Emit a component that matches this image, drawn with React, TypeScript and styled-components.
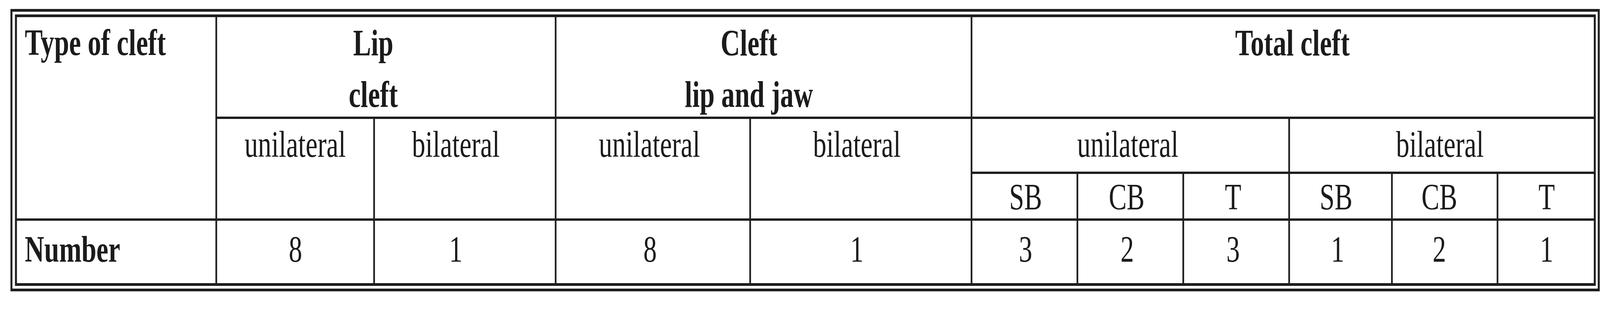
import React, { useEffect, useState } from 'react';
import styled, { createGlobalStyle } from 'styled-components';

const PAGE_W = 5667;
const PAGE_H = 800;

const GlobalStyle = createGlobalStyle`
  html, body {
    margin: 0;
    padding: 0;
    background: #ffffff;
    overflow: hidden;
  }
  body {
    font-family: "Liberation Serif", "Times New Roman", serif;
    color: #1b1b1b;
  }
  * {
    box-sizing: border-box;
  }
`;

// the drawing is laid out at 5667x800 and fitted to whatever window it gets
const Page = styled.div`
  width: ${PAGE_W}px;
  height: ${PAGE_H}px;
  overflow: hidden;
  transform-origin: 0 0;
`;

// outer rule of the double border
const Frame = styled.div`
  display: inline-block;
  margin: 23px 0 0 37px;
  border: 7px solid #1e1e1e;
  padding: 7px 7px 7px 9px;
`;

// the rules between cells are the grid background showing through the gaps
const Grid = styled.div`
  display: grid;
  grid-template-columns: 703px 553px 637px 683px 778px 369px 369px 369px 358px 368px 338px;
  grid-template-rows: 255px 135px 114px 160px;
  gap: 6px;
  padding: 7px;
  background: #1e1e1e;
`;

const Cell = styled.div<{ $col: string; $row: string; $shift?: number }>`
  grid-column: ${({ $col }) => $col};
  grid-row: ${({ $row }) => $row};
  background: #ffffff;
  font-size: 95px;
  line-height: 130px;
  text-align: center;
  white-space: nowrap;
  padding-left: ${({ $shift = 0 }) => Math.max(0, $shift * 2)}px;
  padding-right: ${({ $shift = 0 }) => Math.max(0, -$shift * 2)}px;
`;

const LabelCell = styled(Cell)`
  font-weight: 700;
  text-align: left;
  padding-left: 28px;
`;

const RowLabelCell = styled(LabelCell)`
  padding-top: 8px;
`;

const GroupCell = styled(Cell)`
  font-weight: 700;
  line-height: 132px;
`;

const CodeCell = styled(Cell)`
  line-height: 118px;
`;

const ValueCell = styled(Cell)`
  padding-top: 8px;
`;

const groups = [
  { col: '2 / 4', lines: ['Lip', 'cleft'], shift: -45 },
  { col: '4 / 6', lines: ['Cleft', 'lip and jaw'], shift: -52 },
  { col: '6 / 12', lines: ['Total cleft'], shift: 33 },
];

const sides = [
  { col: '2', row: '2 / 4', label: 'unilateral', shift: 0 },
  { col: '3', row: '2 / 4', label: 'bilateral', shift: -32 },
  { col: '4', row: '2 / 4', label: 'unilateral', shift: -12 },
  { col: '5', row: '2 / 4', label: 'bilateral', shift: -14 },
  { col: '6 / 9', row: '2', label: 'unilateral', shift: -9 },
  { col: '9 / 12', row: '2', label: 'bilateral', shift: -7 },
];

const codes = [
  { label: 'SB', shift: 4 },
  { label: 'CB', shift: -13 },
  { label: 'T', shift: -11 },
  { label: 'SB', shift: -16 },
  { label: 'CB', shift: -19 },
  { label: 'T', shift: 2 },
];

const values = [
  { v: '8', shift: 1 },
  { v: '1', shift: -32 },
  { v: '8', shift: -10 },
  { v: '1', shift: -14 },
  { v: '3', shift: 4 },
  { v: '2', shift: -11 },
  { v: '3', shift: -11 },
  { v: '1', shift: -10 },
  { v: '2', shift: -19 },
  { v: '1', shift: 2 },
];

const readScale = () => ({
  x: document.documentElement.clientWidth / PAGE_W,
  y: document.documentElement.clientHeight / PAGE_H,
});

const App: React.FC = () => {
  const [scale, setScale] = useState(readScale);

  useEffect(() => {
    const onResize = () => setScale(readScale());
    window.addEventListener('resize', onResize);
    return () => window.removeEventListener('resize', onResize);
  }, []);

  return (
    <>
      <GlobalStyle />
      <Page style={{ transform: `scale(${scale.x}, ${scale.y})` }}>
        <Frame>
          <Grid>
            <LabelCell $col="1" $row="1 / 4">Type of cleft</LabelCell>

            {groups.map((g) => (
              <GroupCell key={g.col} $col={g.col} $row="1" $shift={g.shift}>
                {g.lines.map((line, i) => (
                  <React.Fragment key={line}>
                    {i > 0 && <br />}
                    {line}
                  </React.Fragment>
                ))}
              </GroupCell>
            ))}

            {sides.map((s) => (
              <Cell key={s.col} $col={s.col} $row={s.row} $shift={s.shift}>
                {s.label}
              </Cell>
            ))}

            {codes.map((c, i) => (
              <CodeCell key={i} $col={String(6 + i)} $row="3" $shift={c.shift}>
                {c.label}
              </CodeCell>
            ))}

            <RowLabelCell $col="1" $row="4">Number</RowLabelCell>

            {values.map((item, i) => (
              <ValueCell key={i} $col={String(2 + i)} $row="4" $shift={item.shift}>
                {item.v}
              </ValueCell>
            ))}
          </Grid>
        </Frame>
      </Page>
    </>
  );
};

export default App;
